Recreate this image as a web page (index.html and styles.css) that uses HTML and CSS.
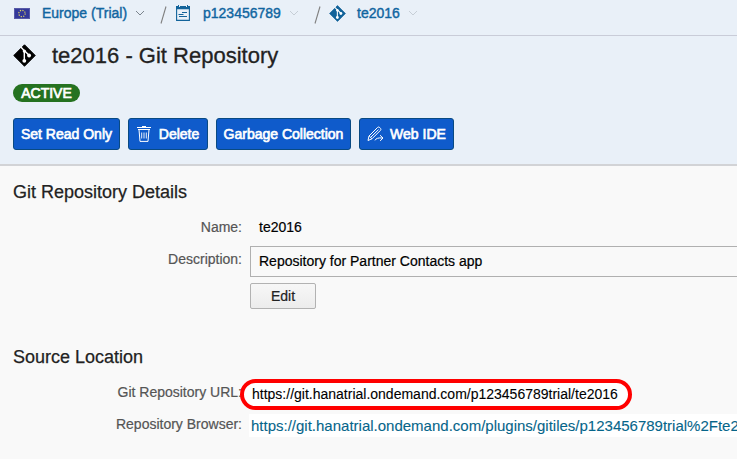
FILE: index.html
```html
<!DOCTYPE html>
<html lang="en">
<head>
<meta charset="utf-8">
<title>te2016 - Git Repository</title>
<link rel="stylesheet" href="styles.css">
</head>
<body>
<svg width="0" height="0" class="defs">
  <symbol id="git" viewBox="0 0 24 24">
    <path d="M12 .8 23.2 12 12 23.2.8 12Z" fill="currentColor" stroke="currentColor" stroke-linejoin="round"/>
    <path d="M8.2 3.2 11.8 7V18M12 7l5 5" fill="none" stroke="#fff" stroke-width="1.5"/>
    <circle cx="11.8" cy="7.4" r="1.7" fill="#fff"/><circle cx="11.8" cy="17.6" r="2" fill="#fff"/><circle cx="16.8" cy="12" r="2" fill="#fff"/>
  </symbol>
  <symbol id="chevron" viewBox="0 0 10 6"><path d="M1 1l4 4 4-4" fill="none" stroke="currentColor"/></symbol>
  <symbol id="slash" viewBox="0 0 7 18"><path d="M6 .5 1 17.5" fill="none" stroke="#808080" stroke-width="1.1"/></symbol>
</svg>
<header>
  <nav class="crumbs">
    <svg class="flag" width="16" height="11" viewBox="0 0 16 11"><rect width="16" height="11" fill="#33389a"/><rect x=".5" y=".5" width="15" height="10" fill="none" stroke="#575aa7"/><circle cx="8" cy="5.5" r="3.2" fill="none" stroke="#e2d75e" stroke-width="1.2" stroke-dasharray="1.2 1.31"/></svg>
    <a class="crumb region">Europe (Trial)</a>
    <svg class="chev" width="10" height="6"><use href="#chevron"/></svg>
    <svg class="slash s1" width="7" height="18"><use href="#slash"/></svg>
    <svg class="account" width="14" height="16" viewBox="0 0 14 16"><path d="M.6 1.5v13.9h12.8V1.5" fill="none" stroke="#12639a" stroke-width="1.1"/><path d="M0 1h2v1h2V1h6v1h2V1h2v3.2H0Z" fill="#12639a"/><path d="M2.5 0v2M11.5 0v2" stroke="#12639a"/><path d="M6 7.5h5M2.5 9.5h5M3 11.5h8" stroke="#12639a" stroke-width="1.1"/></svg>
    <a class="crumb subaccount">p123456789</a>
    <svg class="chev pale" width="10" height="6"><use href="#chevron"/></svg>
    <svg class="slash s2" width="7" height="18"><use href="#slash"/></svg>
    <svg class="git-small" width="17" height="17"><use href="#git"/></svg>
    <a class="crumb repo">te2016</a>
    <svg class="chev pale" width="10" height="6"><use href="#chevron"/></svg>
  </nav>
  <div class="title"><svg width="23" height="23"><use href="#git"/></svg><h1>te2016 - Git Repository</h1></div>
  <span class="badge">ACTIVE</span>
  <div class="actions">
    <button class="read-only">Set Read Only</button>
    <button class="delete"><svg width="14" height="16" viewBox="0 0 14 16" fill="none" stroke="#fff"><path d="M0 1.5h14M5 .5h4M1 3.5h12"/><path d="M2 3.5 3 15.4h8l1-11.9"/><path d="M4.7 6.5v6M7 6.5v6M9.3 6.5v6" stroke-width=".9"/></svg>Delete</button>
    <button class="garbage">Garbage Collection</button>
    <button class="ide"><svg width="17" height="16" viewBox="0 0 17 16" fill="none" stroke="#fff" stroke-width="1"><path d="M1 14.5 2 10 10.5 1.5Q11.5.5 12.7 1.5L13.6 2.5Q14.3 3.5 13.4 4.4L5 12.8ZM2.2 10l2.8 2.8M3.6 11.4l7.9-7.8M8 14.4q1-3 7.7-2.4M13 9.2l3 2.8-2.8 2.9"/></svg>Web IDE</button>
  </div>
</header>
<main>
  <h2>Git Repository Details</h2>
  <div class="row name"><span class="label">Name:</span><span class="value">te2016</span></div>
  <div class="row description"><span class="label">Description:</span><div class="field">Repository for Partner Contacts app</div></div>
  <button class="edit">Edit</button>
  <h2 class="source">Source Location</h2>
  <div class="row url"><span class="label">Git Repository URL:</span><span class="highlight">https://git.hanatrial.ondemand.com/p123456789trial/te2016</span></div>
  <div class="row browser"><span class="label">Repository Browser:</span><a class="link">https://git.hanatrial.ondemand.com/plugins/gitiles/p123456789trial%2Fte2</a></div>
</main>
</body>
</html>
```
FILE: styles.css
```css
* { box-sizing: border-box; }
body { margin: 0; width: 737px; height: 459px; overflow: hidden; background: #f9f9f9; color: #000; font: 14px/16px "Liberation Sans", Arial, sans-serif; -webkit-text-stroke: .2px; }
.defs { position: absolute; }
svg { display: block; flex: none; }
header { height: 166px; background: #e9f0f8; border-bottom: 2px solid #d2d3d6; }
.crumbs { display: flex; align-items: center; height: 36px; padding: 0 0 9px 14px; border-bottom: 1px solid #c9ccd8; }
.crumb { color: #1065a0; -webkit-text-stroke: .4px; white-space: nowrap; }
.region { width: 86px; margin-left: 12px; }
.chev { color: #7c858e; margin-left: 7px; }
.pale { color: #c6ced6; margin-left: 8px; }
.slash { margin-top: 3px; }
.s1 { margin: 3px 9px 0 15px; }
.s2 { margin: 3px 8px 0 15px; }
.subaccount { width: 78px; margin-left: 13px; }
.git-small { color: #12639a; }
.repo { width: 43px; margin-left: 11px; }
.title { display: flex; align-items: center; height: 40px; padding: 0 0 1px 13px; }
.title svg { margin-top: -1px; }
h1 { margin: 1px 0 0 16px; font-size: 22px; line-height: 26px; font-weight: 400; color: #222; -webkit-text-stroke: .3px; }
.badge { display: block; width: 67px; height: 18px; margin: 8px 0 0 13px; border-radius: 9px; background: #257220; color: #fff; text-align: center; line-height: 18px; -webkit-text-stroke: .7px; }
.actions { display: flex; gap: 8px; margin: 16px 0 0 13px; }
button { font: inherit; -webkit-text-stroke: inherit; padding: 0; }
.actions button { display: flex; align-items: center; justify-content: center; height: 32px; border: 1px solid #094a82; border-radius: 3px; background: #0f5bcb; color: #fff; -webkit-text-stroke: .65px; white-space: nowrap; }
.actions svg { margin: -1px 8px 0 0; }
.actions .ide svg { margin: 0 6px 0 0; }
.read-only { width: 107px; }
.delete { width: 80px; }
.garbage { width: 135px; }
.ide { width: 95px; }
main { padding: 16px 0 0 13px; }
h2 { margin: 0; font-size: 18px; line-height: 20px; font-weight: 400; color: #222; -webkit-text-stroke: .25px; }
.row { display: flex; white-space: nowrap; }
.label { width: 229px; text-align: right; color: #555; flex: none; }
.name { margin-top: 17px; }
.value { margin-left: 17px; }
.description { margin-top: 11px; height: 31px; }
.description .label { padding-top: 5px; }
.field { width: 487px; height: 31px; margin-left: 8px; padding-left: 8px; border: 1px solid #b0b0b0; border-right: 0; line-height: 29px; }
.edit { display: block; width: 66px; height: 26px; margin: 6px 0 0 237px; border: 1px solid #b2b2b2; border-radius: 2px; background: linear-gradient(#f7f7f7, #ececec); color: #222; }
.source { margin-top: 38px; }
.url { margin-top: 12px; height: 31px; }
.url .label { padding-top: 5px; }
.highlight { position: relative; width: 392px; height: 31px; margin-left: -2px; padding-left: 8px; border: 4px solid #f00; border-radius: 16px; background: #fff; line-height: 23px; -webkit-text-stroke: .1px; }
.browser { margin-top: 4px; height: 23px; }
.browser .label { padding-top: 2px; }
.link { width: 488px; margin-left: 7px; padding-left: 2px; background: #fff; color: #06658a; font-size: 15px; line-height: 24px; -webkit-text-stroke: .1px; }
```
